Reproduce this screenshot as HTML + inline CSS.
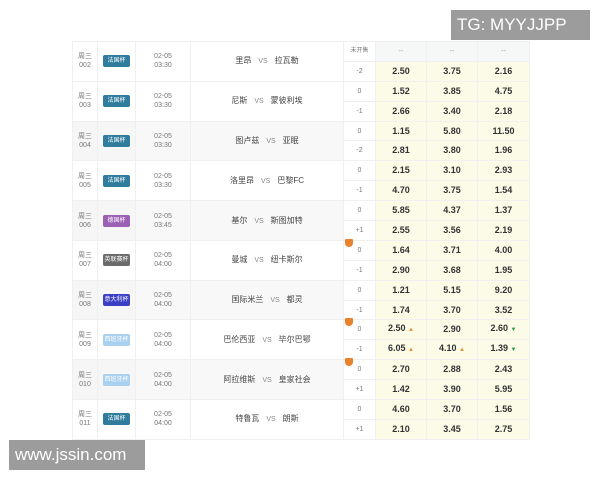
<!DOCTYPE html>
<html><head><meta charset="utf-8"><style>
body{margin:0;width:600px;height:480px;background:#fff;position:relative;overflow:hidden;font-family:"Liberation Sans","Noto Sans CJK SC",sans-serif}
table{position:absolute;left:72px;top:41px;border-collapse:collapse;table-layout:fixed}
td{padding:0;height:18.9px;border:1px solid #f0f0f0;text-align:center;font-size:7px;color:#777;line-height:9px}
tr.g td.l{background:#f6f6f6}
.b{display:inline-block;width:27px;height:12px;line-height:12px;border-radius:2px;color:#fff;font-size:6px}
.o{background:#fbfbe8;font-weight:bold;font-size:9px;color:#333}
.h{background:#f6f8f8;color:#999;font-size:7px}
.t{font-size:8px;color:#444}
.t span{color:#888;font-size:7px;margin:0 7px}
.up{color:#e8902c;font-size:6px;font-style:normal}.dn{color:#2e9b3e;font-size:6px;font-style:normal}
.hc{position:relative}
.sh{position:absolute;left:1px;top:-2px;width:8px;height:8px;background:#e8822c;border-radius:1px 1px 4px 4px}
.wm{position:absolute;background:#9c9c9c;color:#fff;font-size:17px;line-height:30px;padding:0 6px}
</style></head><body>
<table>
<colgroup><col style="width:25px"><col style="width:38px"><col style="width:55px"><col style="width:153px"><col style="width:32px"><col style="width:51px"><col style="width:51px"><col style="width:52px"></colgroup>
<tr><td rowspan=2 class=l>周三<br>002</td><td rowspan=2 class=l><span class=b style="background:#2f7c9c">法国杯</span></td><td rowspan=2>02-05<br>03:30</td><td rowspan=2 class=t>里昂<span>VS</span>拉瓦勒</td><td style="font-size:6px">未开售</td><td class=h>--</td><td class=h>--</td><td class=h>--</td></tr>
<tr><td>-2</td><td class=o>2.50</td><td class=o>3.75</td><td class=o>2.16</td></tr>
<tr><td rowspan=2 class=l>周三<br>003</td><td rowspan=2 class=l><span class=b style="background:#2f7c9c">法国杯</span></td><td rowspan=2>02-05<br>03:30</td><td rowspan=2 class=t>尼斯<span>VS</span>蒙彼利埃</td><td>0</td><td class=o>1.52</td><td class=o>3.85</td><td class=o>4.75</td></tr>
<tr><td>-1</td><td class=o>2.66</td><td class=o>3.40</td><td class=o>2.18</td></tr>
<tr class=g><td rowspan=2 class=l>周三<br>004</td><td rowspan=2 class=l><span class=b style="background:#2f7c9c">法国杯</span></td><td rowspan=2 style="background:#f8f8f8">02-05<br>03:30</td><td rowspan=2 class=t style="background:#f8f8f8">图卢兹<span>VS</span>亚眠</td><td>0</td><td class=o>1.15</td><td class=o>5.80</td><td class=o>11.50</td></tr>
<tr><td>-2</td><td class=o>2.81</td><td class=o>3.80</td><td class=o>1.96</td></tr>
<tr><td rowspan=2 class=l>周三<br>005</td><td rowspan=2 class=l><span class=b style="background:#2f7c9c">法国杯</span></td><td rowspan=2>02-05<br>03:30</td><td rowspan=2 class=t>洛里昂<span>VS</span>巴黎FC</td><td>0</td><td class=o>2.15</td><td class=o>3.10</td><td class=o>2.93</td></tr>
<tr><td>-1</td><td class=o>4.70</td><td class=o>3.75</td><td class=o>1.54</td></tr>
<tr class=g><td rowspan=2 class=l>周三<br>006</td><td rowspan=2 class=l><span class=b style="background:#9b5fb3">德国杯</span></td><td rowspan=2 style="background:#f8f8f8">02-05<br>03:45</td><td rowspan=2 class=t style="background:#f8f8f8">基尔<span>VS</span>斯图加特</td><td>0</td><td class=o>5.85</td><td class=o>4.37</td><td class=o>1.37</td></tr>
<tr><td>+1</td><td class=o>2.55</td><td class=o>3.56</td><td class=o>2.19</td></tr>
<tr><td rowspan=2 class=l>周三<br>007</td><td rowspan=2 class=l><span class=b style="background:#6b6b6b">英联赛杯</span></td><td rowspan=2>02-05<br>04:00</td><td rowspan=2 class=t>曼城<span>VS</span>纽卡斯尔</td><td class=hc><i class=sh></i>0</td><td class=o>1.64</td><td class=o>3.71</td><td class=o>4.00</td></tr>
<tr><td>-1</td><td class=o>2.90</td><td class=o>3.68</td><td class=o>1.95</td></tr>
<tr class=g><td rowspan=2 class=l>周三<br>008</td><td rowspan=2 class=l><span class=b style="background:#3b3fc4">意大利杯</span></td><td rowspan=2 style="background:#f8f8f8">02-05<br>04:00</td><td rowspan=2 class=t style="background:#f8f8f8">国际米兰<span>VS</span>都灵</td><td>0</td><td class=o>1.21</td><td class=o>5.15</td><td class=o>9.20</td></tr>
<tr><td>-1</td><td class=o>1.74</td><td class=o>3.70</td><td class=o>3.52</td></tr>
<tr><td rowspan=2 class=l>周三<br>009</td><td rowspan=2 class=l><span class=b style="background:#a9d0ef">西班牙杯</span></td><td rowspan=2>02-05<br>04:00</td><td rowspan=2 class=t>巴伦西亚<span>VS</span>毕尔巴鄂</td><td class=hc><i class=sh></i>0</td><td class=o>2.50 <i class=up>▲</i></td><td class=o>2.90</td><td class=o>2.60 <i class=dn>▼</i></td></tr>
<tr><td>-1</td><td class=o>6.05 <i class=up>▲</i></td><td class=o>4.10 <i class=up>▲</i></td><td class=o>1.39 <i class=dn>▼</i></td></tr>
<tr class=g><td rowspan=2 class=l>周三<br>010</td><td rowspan=2 class=l><span class=b style="background:#a9d0ef">西班牙杯</span></td><td rowspan=2 style="background:#f8f8f8">02-05<br>04:00</td><td rowspan=2 class=t style="background:#f8f8f8">阿拉维斯<span>VS</span>皇家社会</td><td class=hc><i class=sh></i>0</td><td class=o>2.70</td><td class=o>2.88</td><td class=o>2.43</td></tr>
<tr><td>+1</td><td class=o>1.42</td><td class=o>3.90</td><td class=o>5.95</td></tr>
<tr><td rowspan=2 class=l>周三<br>011</td><td rowspan=2 class=l><span class=b style="background:#2f7c9c">法国杯</span></td><td rowspan=2>02-05<br>04:00</td><td rowspan=2 class=t>特鲁瓦<span>VS</span>朗斯</td><td>0</td><td class=o>4.60</td><td class=o>3.70</td><td class=o>1.56</td></tr>
<tr><td>+1</td><td class=o>2.10</td><td class=o>3.45</td><td class=o>2.75</td></tr>
</table>
<div class=wm style="left:451px;top:10px;width:127px;">TG: MYYJJPP</div>
<div class=wm style="left:9px;top:440px;width:124px;">www.jssin.com</div>
</body></html>
